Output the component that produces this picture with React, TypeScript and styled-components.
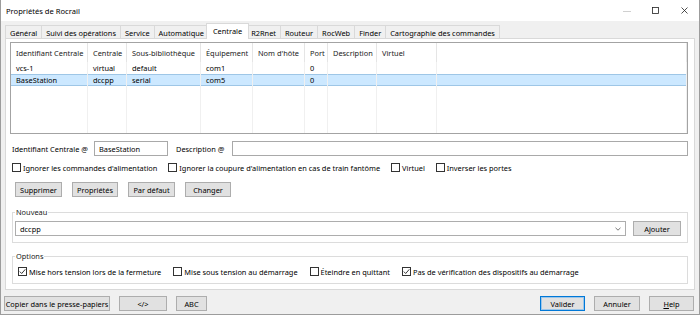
import React from 'react';
import styled, { createGlobalStyle, css } from 'styled-components';

const Global = createGlobalStyle`
  html, body { margin: 0; padding: 0; background: #ffffff; }
  body {
    font-family: "Noto Sans", "Open Sans", sans-serif;
    font-size: 7.4px;
    color: #000;
  }
  * { box-sizing: border-box; }
`;

const Window = styled.div`
  width: 700px;
  height: 315px;
  display: flex;
  flex-direction: column;
  background: #f0f0f0;
  overflow: hidden;
  border-left: 1px solid #9c9c9c;
  border-right: 1px solid #9c9c9c;
  border-bottom: 1px solid #9c9c9c;
`;

const TitleBar = styled.div`
  height: 21px;
  flex: 0 0 21px;
  background: #ffffff;
  display: flex;
  align-items: center;
  padding-left: 5px;
`;

const Title = styled.span`
  font-size: 7.6px;
  line-height: 10px;
`;

const Controls = styled.div`
  margin-left: auto;
  display: flex;
  height: 100%;
`;

const CtrlButton = styled.div`
  width: 29px;
  height: 100%;
  display: flex;
  align-items: center;
  justify-content: center;
`;

const TabStrip = styled.div`
  height: 17px;
  flex: 0 0 17px;
  display: flex;
  align-items: flex-end;
  padding-left: 4px;
`;

const Tab = styled.div<{ $active?: boolean }>`
  height: 13px;
  padding: 1px 4px 0;
  border: 1px solid #d9d9d9;
  border-bottom: 0;
  margin-left: -1px;
  background: #f0f0f0;
  display: flex;
  align-items: center;
  white-space: nowrap;
  line-height: 10px;
  &:first-child { margin-left: 0; }
  ${(p) =>
    p.$active &&
    css`
      height: 16px;
      margin-bottom: -1px;
      margin-left: -3px;
      margin-right: -2px;
      padding: 0 6px 1px;
      background: #ffffff;
      position: relative;
      z-index: 1;
    `}
`;

const Panel = styled.div`
  margin: 0 4px;
  height: 252px;
  flex: 0 0 252px;
  background: #ffffff;
  border: 1px solid #d9d9d9;
  padding: 3px 6px 0 4px;
  display: flex;
  flex-direction: column;
`;

const List = styled.div`
  height: 92px;
  flex: 0 0 92px;
  border: 1px solid #a3a3a3;
  background: #ffffff;
  overflow: hidden;
  display: flex;
  flex-direction: column;
`;

const gridCols = '77px 39px 74px 52px 52px 23px 49px 60px 1fr';

const HeaderRow = styled.div`
  display: grid;
  grid-template-columns: ${gridCols};
  height: 19px;
  flex: 0 0 19px;
`;

const HeaderCell = styled.div`
  border-right: 1px solid #e5e5e5;
  padding-left: 5px;
  display: flex;
  align-items: center;
  white-space: nowrap;
  overflow: hidden;
  color: #1a1a1a;
`;

const BodyRow = styled.div<{ $selected?: boolean }>`
  display: grid;
  grid-template-columns: ${gridCols};
  height: 12px;
  flex: 0 0 12px;
  ${(p) =>
    p.$selected &&
    css`
      background: #cce8ff;
      box-shadow: inset 0 1px 0 #9ec6e6, inset 0 -1px 0 #9ec6e6;
    `}
`;

const FillerRow = styled.div`
  display: grid;
  grid-template-columns: ${gridCols};
  flex: 1;
`;

const BodyCell = styled.div`
  border-right: 1px solid #f0f0f0;
  padding-left: 5px;
  display: flex;
  align-items: center;
  white-space: nowrap;
  overflow: hidden;
  line-height: 10px;
`;

const FormRow = styled.div`
  display: flex;
  align-items: center;
  margin-top: 7px;
  padding-left: 2px;
  height: 15px;
`;

const FieldLabel = styled.span<{ $w: number }>`
  width: ${(p) => p.$w}px;
  flex: 0 0 ${(p) => p.$w}px;
  white-space: nowrap;
  line-height: 10px;
`;

const TextBox = styled.div<{ $w?: number }>`
  height: 15px;
  border: 1px solid #a9a9a9;
  background: #fff;
  display: flex;
  align-items: center;
  padding-left: 4px;
  line-height: 10px;
  ${(p) => (p.$w ? `width: ${p.$w}px; flex: 0 0 ${p.$w}px;` : 'flex: 1;')}
`;

const Spacer = styled.div<{ $w: number }>`
  width: ${(p) => p.$w}px;
  flex: 0 0 ${(p) => p.$w}px;
`;

const CheckRow = styled.div<{ $gap: number; $top: number; $left: number }>`
  display: flex;
  align-items: center;
  gap: ${(p) => p.$gap}px;
  margin-top: ${(p) => p.$top}px;
  padding-left: ${(p) => p.$left}px;
  height: 11px;
`;

const CheckItem = styled.label`
  display: flex;
  align-items: center;
  white-space: nowrap;
  line-height: 10px;
`;

const Box = styled.span`
  width: 9px;
  height: 9px;
  border: 1px solid #333333;
  background: #ffffff;
  margin-right: 2px;
  display: flex;
  align-items: center;
  justify-content: center;
`;

const ButtonRow = styled.div`
  display: flex;
  gap: 10px;
  margin-top: 9px;
  padding-left: 5px;
`;

const Button = styled.div<{ $w: number; $default?: boolean }>`
  width: ${(p) => p.$w}px;
  flex: 0 0 ${(p) => p.$w}px;
  height: 15px;
  background: #e1e1e1;
  border: 1px solid ${(p) => (p.$default ? '#0078d7' : '#adadad')};
  display: flex;
  align-items: center;
  justify-content: center;
  white-space: nowrap;
  line-height: 10px;
  ${(p) => p.$default && 'box-shadow: inset 0 0 0 1px #9cc6ea;'}
`;

const Group = styled.fieldset<{ $top: number }>`
  margin: ${(p) => p.$top}px 0 0 2px;
  padding: 0 6px 6px 2px;
  border: 1px solid #dcdcdc;
  min-width: 0;
`;

const Legend = styled.legend`
  padding: 0 1px;
  line-height: 10px;
  font-size: 7.4px;
  color: #1a1a1a;
`;

const GroupLine = styled.div`
  display: flex;
  align-items: center;
  margin-top: 4px;
`;

const Combo = styled.div`
  flex: 1;
  height: 15px;
  border: 1px solid #adadad;
  background: #ffffff;
  display: flex;
  align-items: center;
  padding: 0 4px 0 4px;
  line-height: 10px;
`;

const ComboText = styled.span`
  flex: 1;
`;

const BottomBar = styled.div`
  flex: 1;
  display: flex;
  align-items: flex-start;
  padding: 6px 5px 0 3px;
  gap: 9px;
`;

const Push = styled.div`
  flex: 1;
`;

const Check = ({ checked }: { checked?: boolean }) => (
  <Box>
    {checked && (
      <svg width="7" height="7" viewBox="0 0 7 7">
        <polyline points="0.8,3.6 2.7,5.5 6.3,1.3" fill="none" stroke="#222" strokeWidth="0.9" />
      </svg>
    )}
  </Box>
);

const columns = [
  { key: 'id', title: 'Identifiant Centrale' },
  { key: 'cs', title: 'Centrale' },
  { key: 'lib', title: 'Sous-bibliothèque' },
  { key: 'dev', title: 'Équipement' },
  { key: 'host', title: "Nom d'hôte" },
  { key: 'port', title: 'Port' },
  { key: 'desc', title: 'Description' },
  { key: 'virt', title: 'Virtuel' },
];

type Row = { cells: Record<string, string>; selected?: boolean };

const rows: Row[] = [
  { cells: { id: 'vcs-1', cs: 'virtual', lib: 'default', dev: 'com1', host: '', port: '0', desc: '', virt: '' } },
  { cells: { id: 'BaseStation', cs: 'dccpp', lib: 'serial', dev: 'com5', host: '', port: '0', desc: '', virt: '' }, selected: true },
];

const tabs = [
  'Général',
  'Suivi des opérations',
  'Service',
  'Automatique',
  'Centrale',
  'R2Rnet',
  'Routeur',
  'RocWeb',
  'Finder',
  'Cartographie des commandes',
];

export default function App() {
  return (
    <>
      <Global />
      <Window>
        <TitleBar>
          <Title>Propriétés de Rocrail</Title>
          <Controls>
            <CtrlButton>
              <svg width="8" height="8" viewBox="0 0 8 8">
                <line x1="0" y1="4.5" x2="8" y2="4.5" stroke="#c4c4c4" strokeWidth="0.8" />
              </svg>
            </CtrlButton>
            <CtrlButton>
              <svg width="7" height="7" viewBox="0 0 7 7">
                <rect x="0.5" y="0.5" width="6" height="6" fill="none" stroke="#222" strokeWidth="0.8" />
              </svg>
            </CtrlButton>
            <CtrlButton>
              <svg width="7" height="7" viewBox="0 0 7 7">
                <path d="M0.5 0.5 L6.5 6.5 M6.5 0.5 L0.5 6.5" stroke="#222" strokeWidth="0.8" />
              </svg>
            </CtrlButton>
          </Controls>
        </TitleBar>

        <TabStrip>
          {tabs.map((t) => (
            <Tab key={t} $active={t === 'Centrale'}>
              {t}
            </Tab>
          ))}
        </TabStrip>

        <Panel>
          <List>
            <HeaderRow>
              {columns.map((c) => (
                <HeaderCell key={c.key}>{c.title}</HeaderCell>
              ))}
              <HeaderCell />
            </HeaderRow>
            {rows.map((r) => (
              <BodyRow key={r.cells.id} $selected={!!r.selected}>
                {columns.map((c) => (
                  <BodyCell key={c.key}>{r.cells[c.key]}</BodyCell>
                ))}
                <BodyCell />
              </BodyRow>
            ))}
            <FillerRow>
              {columns.map((c) => (
                <BodyCell key={c.key} />
              ))}
              <BodyCell />
            </FillerRow>
          </List>

          <FormRow>
            <FieldLabel $w={82}>Identifiant Centrale @</FieldLabel>
            <TextBox $w={74}>BaseStation</TextBox>
            <Spacer $w={8} />
            <FieldLabel $w={56}>Description @</FieldLabel>
            <TextBox />
          </FormRow>

          <CheckRow $gap={11} $top={6} $left={2}>
            <CheckItem>
              <Check />
              Ignorer les commandes d'alimentation
            </CheckItem>
            <CheckItem>
              <Check />
              Ignorer la coupure d'alimentation en cas de train fantôme
            </CheckItem>
            <CheckItem>
              <Check />
              Virtuel
            </CheckItem>
            <CheckItem>
              <Check />
              Inverser les portes
            </CheckItem>
          </CheckRow>

          <ButtonRow>
            <Button $w={47}>Supprimer</Button>
            <Button $w={46}>Propriétés</Button>
            <Button $w={47}>Par défaut</Button>
            <Button $w={46}>Changer</Button>
          </ButtonRow>

          <Group $top={10}>
            <Legend>Nouveau</Legend>
            <GroupLine>
              <Combo>
                <ComboText>dccpp</ComboText>
                <svg width="6" height="4" viewBox="0 0 6 4">
                  <polyline points="0.5,0.8 3,3.2 5.5,0.8" fill="none" stroke="#555" strokeWidth="0.8" />
                </svg>
              </Combo>
              <Spacer $w={7} />
              <Button $w={48}>Ajouter</Button>
            </GroupLine>
          </Group>

          <Group $top={8}>
            <Legend>Options</Legend>
            <CheckRow $gap={12} $top={5} $left={3}>
              <CheckItem>
                <Check checked />
                Mise hors tension lors de la fermeture
              </CheckItem>
              <CheckItem>
                <Check />
                Mise sous tension au démarrage
              </CheckItem>
              <CheckItem>
                <Check />
                Éteindre en quittant
              </CheckItem>
              <CheckItem>
                <Check checked />
                Pas de vérification des dispositifs au démarrage
              </CheckItem>
            </CheckRow>
          </Group>
        </Panel>

        <BottomBar>
          <Button $w={106}>Copier dans le presse-papiers</Button>
          <Button $w={48}>&lt;/&gt;</Button>
          <Button $w={31}>ABC</Button>
          <Push />
          <Button $w={45} $default>
            Valider
          </Button>
          <Button $w={46}>Annuler</Button>
          <Button $w={45}>
            <u>H</u>elp
          </Button>
        </BottomBar>
      </Window>
    </>
  );
}
